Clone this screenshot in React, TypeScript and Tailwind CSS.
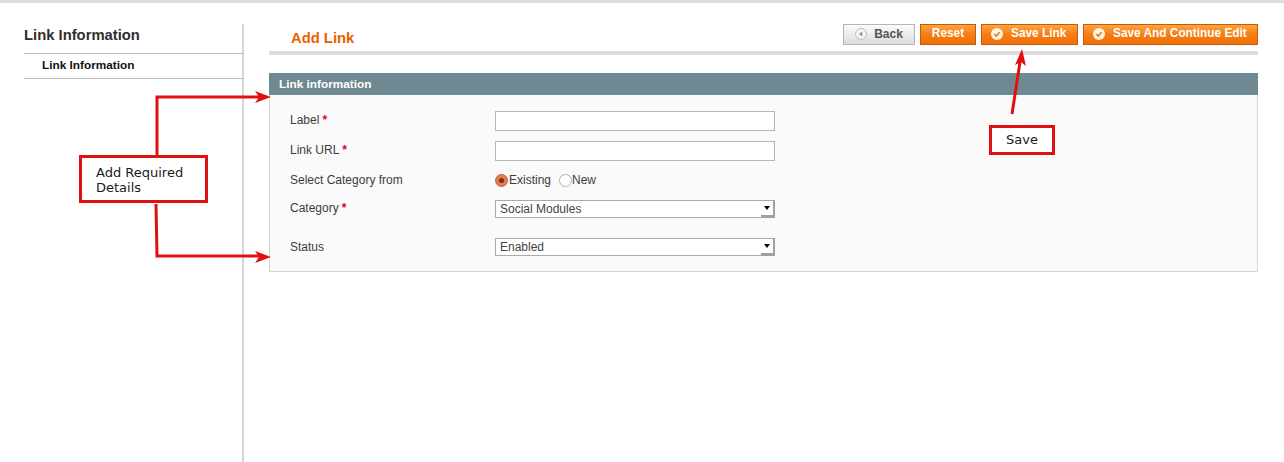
const CheckIcon = () => (
  <svg width="12" height="12" viewBox="0 0 12 12" className="shrink-0">
    <circle cx="6" cy="6" r="6" fill="#fff3e0" />
    <path d="M3.4 6.1 L5.3 8 L8.6 4.2" fill="none" stroke="#ee7a14" strokeWidth="1.7" />
  </svg>
);

const BackIcon = () => (
  <svg width="12" height="12" viewBox="0 0 12 12" className="shrink-0">
    <circle cx="6" cy="6" r="5.5" fill="#f4f4f4" stroke="#bdbdbd" />
    <path d="M7.2 3.6 L4.2 6 L7.2 8.4 Z" fill="#8a8a8a" />
  </svg>
);

const Req = () => <span className="text-[#e2001a] font-bold ml-[3px]">*</span>;

const orangeBtn =
  "h-[21px] flex items-center border border-[#c8590b] bg-gradient-to-b from-[#ffa33a] via-[#f67d12] to-[#ee6f06] text-white text-[11.85px] font-bold pb-[2px]";

const SelectBox = ({ value }: { value: string }) => (
  <div className="relative w-[280px] h-[18px]">
    <select
      defaultValue={value}
      className="appearance-none block w-full h-full bg-white border border-[#aaaaaa] pl-[4px] text-[12px] leading-[16px] text-[#444] outline-none rounded-none"
    >
      <option>{value}</option>
    </select>
    <span className="absolute right-0 top-0 w-[14px] h-[18px] border-r-[2px] border-b-[3px] border-[#a0a0a0] flex items-center justify-center">
      <span className="w-0 h-0 border-l-[3px] border-r-[3px] border-t-[4px] border-l-transparent border-r-transparent border-t-black" />
    </span>
  </div>
);

const TextBox = () => (
  <input type="text" className="block w-[280px] h-[20px] bg-white border border-[#b6b6b6] outline-none" />
);

const Row = ({ label, req, height, lift, children }: { label: string; req?: boolean; height: string; lift?: boolean; children: React.ReactNode }) => (
  <div className={`flex items-center ${height}`}>
    <div className={`w-[205px] text-[12px] text-[#3d3d3d] ${lift ? "pb-[2px]" : ""}`}>
      {label}
      {req && <Req />}
    </div>
    {children}
  </div>
);

const Annotations = () => (
  <>
    <svg width="1284" height="462" className="absolute left-0 top-[-3px] pointer-events-none">
      <g fill="none" stroke="#e01010" strokeWidth="3">
        <path d="M157 156 V97 H260" />
        <path d="M156 204 L157 256 H260" />
        <path d="M1012 114 L1020 62" />
      </g>
      <g fill="#e01010">
        <path d="M271 97 L255 91 L259 97 L255 103 Z" />
        <path d="M271 257 L255 251 L259 257 L255 263 Z" />
        <path d="M1022 49 L1015 65 L1021 62 L1026 66 Z" />
      </g>
    </svg>
    <div className="absolute left-[79px] top-[152px] w-[129px] h-[48px] border-[3px] border-[#e01010] bg-white pl-[14px] pt-[7px] text-[13px] leading-[15px] text-[#1a1a1a] font-['DejaVu_Sans',sans-serif]">
      Add Required
      <br />
      Details
    </div>
    <div className="absolute left-[989px] top-[122px] w-[66px] h-[30px] border-[3px] border-[#e01010] bg-white flex items-center justify-center text-[13px] text-[#1a1a1a] font-['DejaVu_Sans',sans-serif]">
      Save
    </div>
  </>
);

const App = () => {
  return (
    <div className="relative w-[1284px] h-[462px] overflow-hidden bg-white border-t-[3px] border-[#dddddd] font-['Liberation_Sans',Arial,sans-serif]">
      <div className="flex pt-[21px] pl-[24px]">
        {/* sidebar */}
        <div className="w-[220px] h-[438px] border-r-[2px] border-[#d6d6d6]">
          <div className="h-[30px] border-b border-[#bcbcbc] -mr-[2px] pt-[1px] text-[14.8px] leading-[20px] font-bold text-[#2f2f2f]">
            Link Information
          </div>
          <div className="h-[25px] border-b border-[#bcbcbc] -mr-[2px] pl-[18px] pb-[1px] flex items-center text-[11.8px] font-bold text-[#111]">
            Link Information
          </div>
        </div>

        {/* main */}
        <div className="w-[989px] ml-[25px]">
          <div className="h-[31px] border-b-[4px] border-[#dddddd] flex justify-between">
            <h1 className="pl-[22px] pt-[4px] text-[14.8px] leading-[20px] font-bold text-[#eb5e00]">Add Link</h1>
            <div className="flex gap-[5px]">
              <button className="w-[72px] h-[21px] flex items-center justify-center gap-[7px] border border-[#b5b5b5] bg-gradient-to-b from-[#fbfbfb] to-[#dcdcdc] text-[12px] font-bold text-[#555] pb-[2px]">
                <BackIcon />
                Back
              </button>
              <button className={`${orangeBtn} w-[56px] justify-center`}>Reset</button>
              <button className={`${orangeBtn} w-[97px] pl-[9px] gap-[8px]`}>
                <CheckIcon />
                Save Link
              </button>
              <button className={`${orangeBtn} w-[175px] pl-[9px] gap-[8px]`}>
                <CheckIcon />
                Save And Continue Edit
              </button>
            </div>
          </div>

          <div className="mt-[18px]">
            <div className="h-[22px] bg-[#6f8992] pl-[10px] pt-[1px] flex items-center text-[11.8px] font-bold text-white">
              Link information
            </div>
            <div className="h-[177px] bg-[#fafafa] border border-t-0 border-[#d6d6d6] pl-[20px] pt-[16px]">
              <div className="h-[20px]">
                <Row label="Label" req lift height="h-[20px]">
                  <TextBox />
                </Row>
              </div>
              <div className="mt-[10px]">
                <Row label="Link URL" req lift height="h-[20px]">
                  <TextBox />
                </Row>
              </div>
              <div className="mt-[9px]">
                <Row label="Select Category from" height="h-[20px]">
                  <div className="flex items-center text-[12px] text-[#3d3d3d]">
                    <span className="w-[13px] h-[13px] rounded-full border border-[#c9623a] bg-[#e8784f] flex items-center justify-center">
                      <span className="w-[5px] h-[5px] rounded-full bg-[#6e3320]" />
                    </span>
                    <span className="ml-[1px]">Existing</span>
                    <span className="ml-[8px] w-[13px] h-[13px] rounded-full border border-[#b0b0b0] bg-white" />
                    <span>New</span>
                  </div>
                </Row>
              </div>
              <div className="mt-[10px]">
                <Row label="Category" req lift height="h-[18px]">
                  <SelectBox value="Social Modules" />
                </Row>
              </div>
              <div className="mt-[20px]">
                <Row label="Status" height="h-[18px]">
                  <SelectBox value="Enabled" />
                </Row>
              </div>
            </div>
          </div>
        </div>
      </div>

      <Annotations />
    </div>
  );
};

export default App;
